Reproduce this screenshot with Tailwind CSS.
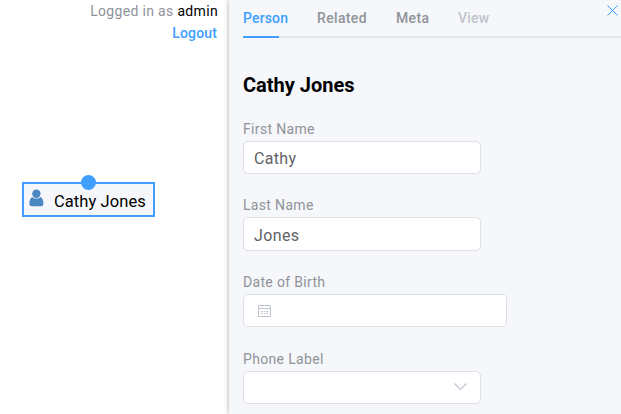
<!DOCTYPE html>
<html lang="en">
<head>
<meta charset="utf-8">
<title>Cathy Jones</title>
<script src="https://cdn.jsdelivr.net/npm/@tailwindcss/browser@4"></script>
</head>
<body class="flex h-[414px] w-[621px] overflow-hidden bg-white font-[Roboto,sans-serif]">
<main class="relative w-[229px] shrink-0">
  <div class="flex flex-col items-end text-[14px] leading-[22px]">
    <p class="mr-[11px] tracking-[0.33px] text-[#909399]">Logged in as <span class="text-black">admin</span></p>
    <a class="mr-3 font-medium tracking-[0.15px] text-[#409eff]">Logout</a>
  </div>
  <div class="absolute left-[22px] top-[182px] flex h-[34.5px] w-[133px] items-center border-2 border-[#409eff] bg-[#f5f7fa]">
    <svg class="absolute left-[5px] top-[5px]" width="15" height="19" viewBox="0 0 15 19" fill="#4b87c0"><circle cx="7.4" cy="4.7" r="4.2"/><path d="M3.3 8C1.2 9 .4 11.4.4 14.8c0 1.7.8 2.4 2.2 2.4h9.6c1.4 0 2.2-.7 2.2-2.4 0-3.4-.8-5.8-2.9-6.8-2.2 2-6 2-8.2 0z"/></svg>
    <span class="absolute left-[30px] top-[7px] whitespace-nowrap text-[16.5px] leading-[22px] tracking-[0.08px] text-black">Cathy Jones</span>
    <span class="absolute left-[57px] top-[-9px] size-[15px] rounded-full bg-[#409eff]"></span>
  </div>
</main>
<aside class="relative w-[392px] shrink-0 bg-[#f5f7fa] pl-[14px] shadow-[0_0_5px_rgba(0,0,0,0.35)]">
  <nav class="flex h-[38px] border-b-2 border-[#e4e7ed] text-[14px] font-medium leading-9 text-[#909399]">
    <div class="relative w-[74px] tracking-[0.15px] text-[#409eff]">Person<span class="absolute left-0 top-9 h-[2px] w-9 bg-[#409eff]"></span></div>
    <div class="w-[79px] tracking-[0.35px]">Related</div>
    <div class="w-[62px] tracking-[0.35px]">Meta</div>
    <div class="tracking-[0.2px] text-[#c0c4cc]">View</div>
  </nav>
  <svg class="absolute left-[378px] top-[5px]" width="11" height="11" viewBox="0 0 11 11" fill="none" stroke="#409eff" stroke-width="1"><path d="M.5.5l10 10M10.5.5l-10 10"/></svg>
  <h1 class="mt-[35px] text-[20px] font-bold leading-6 text-black">Cathy Jones</h1>
  <form class="mt-[22px] text-[14px] leading-5 tracking-[0.33px] text-[#909399]">
    <div class="h-[76px]">
      <label class="block h-[22px]">First Name</label>
      <div class="h-[33px] w-[238px] rounded-[5px] border border-[#dcdfe6] bg-white px-[10px] text-[16px] leading-[33px] tracking-[0.32px] text-[#606266]">Cathy</div>
    </div>
    <div class="h-[77px]">
      <label class="block h-[22px]">Last Name</label>
      <div class="h-[34px] w-[238px] rounded-[5px] border border-[#dcdfe6] bg-white px-[10px] text-[16px] leading-[35px] tracking-[0.4px] text-[#606266]">Jones</div>
    </div>
    <div class="h-[77px]">
      <label class="block h-[22px]">Date of Birth</label>
      <div class="flex h-[33px] w-[264px] rounded-[5px] border border-[#dcdfe6] bg-white pl-[14px] pt-[9px]">
        <svg width="13" height="14" viewBox="0 0 13 14" fill="none" stroke="#c0c4cc"><path d="M.5 1.5h12v11H.5zM.5 4.5h12M3.5.5v2M9.5.5v2M3 7.5h2M6 7.5h1M8 7.5h2M3 9.5h2M6 9.5h1M8 9.5h2"/></svg>
      </div>
    </div>
    <div>
      <label class="block h-[22px]">Phone Label</label>
      <div class="flex h-[33px] w-[238px] justify-end rounded-[5px] border border-[#dcdfe6] bg-white pr-[13px] pt-[11px]">
        <svg width="13" height="8" viewBox="0 0 13 8" fill="none" stroke="#c0c4cc" stroke-width="1.1"><path d="M.5.5l6 6 6-6"/></svg>
      </div>
    </div>
  </form>
</aside>
</body>
</html>
